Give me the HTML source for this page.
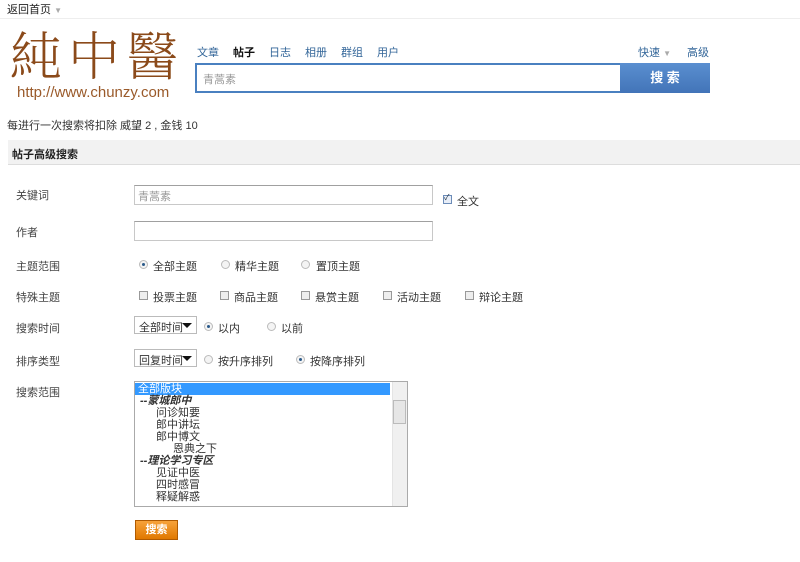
<!DOCTYPE html>
<html><head><meta charset="utf-8"><style>
*{margin:0;padding:0;box-sizing:border-box}
body{width:800px;height:562px;background:#fff;font-family:"Liberation Sans","Noto Sans CJK SC",sans-serif;font-size:11px;color:#333;position:relative;overflow:hidden}
.a{position:absolute;white-space:nowrap}
.nav{color:#369;font-size:11px}
.lbl{left:16px;color:#444}
.inp{position:absolute;border:1px solid #c8c8c8;border-top-color:#a0a0a0;background:#fff}
.rd{position:absolute;width:9px;height:9px;border-radius:50%;border:1px solid #bbb;background:#f4f4f4}
.rd.on::after{content:"";position:absolute;left:2px;top:2px;width:3px;height:3px;border-radius:50%;background:#2a5a8a}
.cb{position:absolute;width:9px;height:9px;border:1px solid #999;background:#eee}
.sel{position:absolute;height:18px;border:1px solid #bbb;background:#fff;padding:2px 0 0 4px;color:#333}
.sel::after{content:"";position:absolute;right:4px;top:6px;border:5px solid transparent;border-top:5px solid #111}
</style></head><body>
<div class="a" style="left:7px;top:1px;font-size:11px;color:#222">返回首页 <span style="color:#aaa;font-size:8px">▼</span></div>
<div class="a" style="left:0;top:18px;width:800px;height:1px;background:#eee"></div>
<div class="a" style="left:10px;top:22px;font-family:'Noto Serif CJK SC',serif;font-size:52px;line-height:62px;color:#8b4a1a;letter-spacing:6px;font-weight:300">純中醫</div>
<div class="a" style="left:17px;top:84px;font-size:15px;color:#9a5a2a">http://www.chunzy.com</div>
<div class="a nav" style="left:197px;top:44px">文章</div>
<div class="a" style="left:233px;top:44px;font-weight:bold;color:#111">帖子</div>
<div class="a" style="left:241px;top:59px;border:4px solid transparent;border-bottom:4px solid #4a80c0;width:0;height:0"></div>
<div class="a nav" style="left:269px;top:44px">日志</div>
<div class="a nav" style="left:305px;top:44px">相册</div>
<div class="a nav" style="left:341px;top:44px">群组</div>
<div class="a nav" style="left:377px;top:44px">用户</div>
<div class="a nav" style="left:638px;top:44px">快速 <span style="color:#aaa;font-size:8px">▼</span></div>
<div class="a nav" style="left:687px;top:44px">高级</div>
<div class="a" style="left:195px;top:63px;width:427px;height:30px;border:2px solid #4a80c0;background:#fff"></div>
<div class="a" style="left:203px;top:71px;color:#999">青蒿素</div>
<div class="a" style="left:620px;top:63px;width:90px;height:30px;background:linear-gradient(#5a8fd0,#4274b8);color:#fff;font-weight:bold;font-size:13px;text-align:center;line-height:30px">搜 索</div>
<div class="a" style="left:7px;top:117px;color:#333">每进行一次搜索将扣除 威望 2 , 金钱 10</div>
<div class="a" style="left:8px;top:140px;width:792px;height:25px;background:#f2f2f2;border-bottom:1px solid #ddd"></div>
<div class="a" style="left:12px;top:146px;font-weight:bold;color:#222">帖子高级搜索</div>

<div class="a lbl" style="top:187px">关键词</div>
<div class="inp" style="left:134px;top:185px;width:299px;height:20px"></div>
<div class="a" style="left:138px;top:188px;color:#999">青蒿素</div>
<div class="cb" style="left:443px;top:195px;background:#e8eef8;border-color:#6c8cb8"></div>
<div class="a" style="left:444px;top:192px;font-size:8px;color:#234">✓</div>
<div class="a" style="left:457px;top:193px">全文</div>

<div class="a lbl" style="top:224px">作者</div>
<div class="inp" style="left:134px;top:221px;width:299px;height:20px"></div>

<div class="a lbl" style="top:258px">主题范围</div>
<div class="rd on" style="left:139px;top:260px"></div><div class="a" style="left:153px;top:258px">全部主题</div>
<div class="rd" style="left:221px;top:260px"></div><div class="a" style="left:235px;top:258px">精华主题</div>
<div class="rd" style="left:301px;top:260px"></div><div class="a" style="left:316px;top:258px">置顶主题</div>

<div class="a lbl" style="top:289px">特殊主题</div>
<div class="cb" style="left:139px;top:291px"></div><div class="a" style="left:153px;top:289px">投票主题</div>
<div class="cb" style="left:220px;top:291px"></div><div class="a" style="left:234px;top:289px">商品主题</div>
<div class="cb" style="left:301px;top:291px"></div><div class="a" style="left:315px;top:289px">悬赏主题</div>
<div class="cb" style="left:383px;top:291px"></div><div class="a" style="left:397px;top:289px">活动主题</div>
<div class="cb" style="left:465px;top:291px"></div><div class="a" style="left:479px;top:289px">辩论主题</div>

<div class="a lbl" style="top:320px">搜索时间</div>
<div class="sel" style="left:134px;top:316px;width:63px">全部时间</div>
<div class="rd on" style="left:204px;top:322px"></div><div class="a" style="left:218px;top:320px">以内</div>
<div class="rd" style="left:267px;top:322px"></div><div class="a" style="left:281px;top:320px">以前</div>

<div class="a lbl" style="top:353px">排序类型</div>
<div class="sel" style="left:134px;top:349px;width:63px">回复时间</div>
<div class="rd" style="left:204px;top:355px"></div><div class="a" style="left:218px;top:353px">按升序排列</div>
<div class="rd on" style="left:296px;top:355px"></div><div class="a" style="left:310px;top:353px">按降序排列</div>

<div class="a lbl" style="top:384px">搜索范围</div>
<div class="a" style="left:134px;top:381px;width:274px;height:126px;border:1px solid #aaa;background:#fff;line-height:12px;font-size:11px">
<div style="background:#3399ff;color:#fff;width:255px;padding-left:3px;margin-top:1px">全部版块</div>
<div style="padding-left:5px;font-weight:bold;font-style:italic">--蒙城郎中</div>
<div style="padding-left:21px">问诊知要</div>
<div style="padding-left:21px">郎中讲坛</div>
<div style="padding-left:21px">郎中博文</div>
<div style="padding-left:38px">恩典之下</div>
<div style="padding-left:5px;font-weight:bold;font-style:italic">--理论学习专区</div>
<div style="padding-left:21px">见证中医</div>
<div style="padding-left:21px">四时感冒</div>
<div style="padding-left:21px">释疑解惑</div>
<div style="position:absolute;right:0;top:0;width:15px;height:124px;background:#f0f0f0;border-left:1px solid #e4e4e4"></div>
<div style="position:absolute;right:1px;top:18px;width:13px;height:24px;background:#e6e6e6;border:1px solid #bbb"></div>
</div>

<div class="a" style="left:135px;top:520px;width:43px;height:20px;background:linear-gradient(#f7a23a,#e07800);border:1px solid #b05a00;color:#fff;text-align:center;line-height:18px;font-weight:bold">搜索</div>
</body></html>
